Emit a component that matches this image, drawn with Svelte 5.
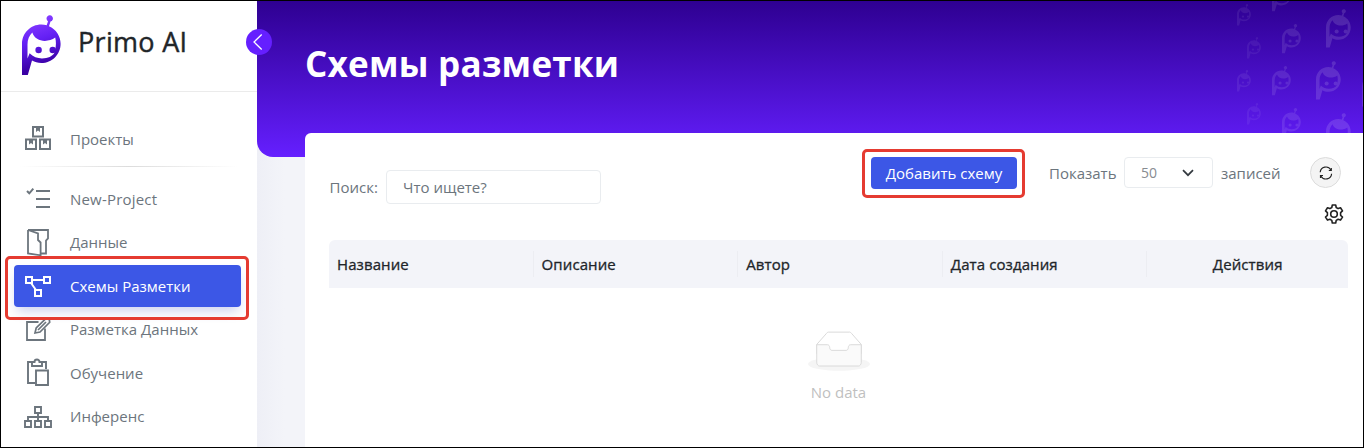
<script>
  const menu = [
    { label: 'Проекты', icon: 'projects' },
    { label: 'New-Project', icon: 'tasks' },
    { label: 'Данные', icon: 'data' },
    { label: 'Схемы Разметки', icon: 'schema', active: true },
    { label: 'Разметка Данных', icon: 'edit' },
    { label: 'Обучение', icon: 'clipboard' },
    { label: 'Инференс', icon: 'tree' }
  ];
  const columns = ['Название', 'Описание', 'Автор', 'Дата создания', 'Действия'];
  const pattern = [
    [1237, 4, 14, 0.07], [1247, 37, 14, 0.06], [1237, 70, 14, 0.07], [1247, 103, 14, 0.06],
    [1272, -18, 19, 0.1], [1282, 24, 19, 0.1], [1272, 66, 19, 0.1], [1282, 108, 19, 0.1],
    [1326, 9, 25, 0.13], [1316, 61, 25, 0.13], [1326, 113, 25, 0.13], [1362, 68, 25, 0.13]
  ];
</script>

{#snippet mascot(fill)}
  <path {fill} fill-rule="evenodd" d="M0 60V28.700C0 18 8.600 9.400 19.300 9.400c2 0 3.700.3 5.400.8L26 6.200A3.200 3.200 0 1 1 28.500 6.600L27 11.200C34 14.300 38.600 21 38.600 28.700 38.600 39.500 30 48 19.300 48c-3.600 0-6.600-.9-9.300-2.500L5.800 60ZM10.300 17.600C7.200 20.500 5.500 25 5.500 29.500V43.500L7.600 38.300C11 42 15.500 43.400 20 43.400 26 43.400 30.500 41.600 32.600 37.600L33 35C34.200 31 34.200 26.500 33.200 22.600 26.500 27.600 13.500 27.600 10.300 17.600Z" />
  <circle {fill} cx="16.600" cy="35" r="3.200" />
  <circle {fill} cx="30.700" cy="35" r="3.200" />
{/snippet}

<div class="frame">
  <aside>
    <div class="brand">
      <svg class="logo" width="39" height="61" viewBox="0 0 39 61">
        <defs>
          <linearGradient id="lg" gradientUnits="userSpaceOnUse" x1="10" y1="8" x2="24" y2="50">
            <stop offset="0" stop-color="#8138ff" /><stop offset="0.400" stop-color="#6420f4" /><stop offset="1" stop-color="#3a00a4" />
          </linearGradient>
        </defs>
        {@render mascot('url(#lg)')}
      </svg>
      <span>Primo AI</span>
    </div>
    <nav>
      {#each menu as m, i}
        <div class="item" class:active={m.active}>
          <svg width="30" height="30" viewBox="0 0 30 30" fill="none" stroke="currentColor" stroke-width="2">
            {#if m.icon === 'projects'}
              <path d="M10 3h10v9.500h-10zM3 15.500h10V25H3zM17 15.500h10V25H17z" />
              <path stroke="none" fill="currentColor" d="M13 3v5l2-1.500 2 1.500V3zM6 15.500v5l2-1.500 2 1.500v-5zM20 15.500v5l2-1.500 2 1.500v-5z" />
            {:else if m.icon === 'tasks'}
              <path d="M13 7h14M13 15h14M13 23h14M4 7l2.300 2.300L10.300 4.700" />
            {:else if m.icon === 'data'}
              <path stroke-width="1.800" d="M5 2h20v8.500l-2 2V25.500h-5M5 2v23.500l12.600 1.800V14.500L15 12V5.500L5 2" />
            {:else if m.icon === 'schema'}
              <path d="M3 6h6v6H3zM21 6h6v6h-6zM12 19h6v6h-6zM9 9h12M8 12l5 7" />
            {:else if m.icon === 'edit'}
              <path stroke-width="1.800" d="M15.500 7H4v18h18V13.500" />
              <path stroke-width="1.700" d="M12 18l1.200-5L22.500 3.800l3.700.3.500 3.200L17 17zM15 15l8-8" />
            {:else if m.icon === 'clipboard'}
              <path stroke-width="1.900" d="M9.500 4H5v21h7M19.500 4H23v7M9 4v4h10V4h-2.500a2.500 2.500 0 0 0-5 0zM13 12.500h12V27H13z" />
            {:else}
              <path stroke-width="1.900" d="M12 5h6v6h-6zM2 19h6v6H2zM12 19h6v6h-6zM22 19h6v6h-6zM15 11v8M5 19v-4h20v4" />
            {/if}
          </svg>
          <span>{m.label}</span>
        </div>
        {#if i === 0}<div class="divider"></div>{/if}
      {/each}
    </nav>
    <button class="collapse" aria-label="Свернуть">
      <svg width="26" height="26" viewBox="0 0 26 26" fill="none" stroke="#fff" stroke-width="1.300"><path d="M15.700 5.500 8 13l7.700 7.500" /></svg>
    </button>
    <div class="mark mark-nav"></div>
  </aside>
  <main>
    <header>
      <svg class="pattern" width="130" height="132" viewBox="1233 1 130 132">
        {#each pattern as [x, y, w, o]}
          <g transform="translate({x} {y}) scale({w / 39})" opacity={o}>{@render mascot('#fff')}</g>
        {/each}
      </svg>
      <h1>Схемы разметки</h1>
    </header>
    <section>
      <div class="toolbar">
        <div class="search"><span class="caption">Поиск:</span><div class="field">Что ищете?</div></div>
        <div class="add"><button>Добавить схему</button><div class="mark mark-add"></div></div>
        <span class="show">Показать</span>
        <div class="select"><span>50</span>
          <svg width="12" height="8" viewBox="0 0 12 8" fill="none" stroke="#343a40" stroke-width="1.700"><path d="M1 1.200l5 5 5-5" /></svg>
        </div>
        <span class="records">записей</span>
        <div class="refresh">
          <svg width="14" height="14" viewBox="0 0 14 14" fill="none" stroke="#222" stroke-width="1.150"><path d="M1.200 6.300A5.700 5.700 0 0 1 11.900 4M12.600 7.700A5.700 5.700 0 0 1 1.900 10M12.300 1.900v2.600H9.800M1.500 12.100V9.500H4" /></svg>
        </div>
      </div>
      <div class="settings">
        <svg width="20" height="20" viewBox="0 0 20 20" fill="none" stroke="#222" stroke-width="1.600" stroke-linejoin="round"><path d="M8.300 1h3.400l.5 2.500 1.900 1.100 2.400-.8 2 3.100-1.900 1.700v2.700l1.900 1.700-2 3.100-2.400-.8-1.900 1.100-.5 2.600H8.300l-.5-2.600-1.900-1.100-2.400.8-2-3.100 1.900-1.700V8.600L1.500 6.900l2-3.100 2.400.8 1.900-1.100z" /><circle cx="10" cy="10" r="3.300" /></svg>
      </div>
      <div class="thead">
        {#each columns as c}<div class="th">{c}</div>{/each}
      </div>
      <div class="empty">
        <svg width="62" height="40" viewBox="0 0 64 41">
          <g transform="translate(0 1)" fill="none">
            <ellipse fill="#f5f5f5" cx="32" cy="33" rx="32" ry="7" />
            <g stroke="#d9d9d9"><path d="M55 12.760 44.854 1.258C44.367.474 43.656 0 42.907 0H21.093c-.749 0-1.460.474-1.947 1.257L9 12.761V22h46v-9.240z" />
            <path fill="#fafafa" d="M41.613 15.931c0-1.605.994-2.930 2.227-2.931H55v18.137C55 33.260 53.680 35 52.050 35h-40.100C10.320 35 9 33.259 9 31.137V13h11.160c1.233 0 2.227 1.323 2.227 2.928v.022c0 1.605 1.005 2.901 2.237 2.901h14.752c1.232 0 2.237-1.308 2.237-2.913v-.007z" /></g>
          </g>
        </svg>
        <p>No data</p>
      </div>
    </section>
  </main>
</div>

<style>
  :global(body) { margin: 0; }
  * { box-sizing: border-box; }
  .frame { width: 1364px; height: 448px; border: 1px solid #000; display: flex; overflow: hidden; background: #f3f4f9; font: 15px/20px "Open Sans", "Noto Sans", sans-serif; color: #6c757d; }
  aside { position: relative; width: 256px; flex: none; background: #fff; z-index: 2; }
  .brand { height: 91px; border-bottom: 1px solid #ebebeb; display: flex; padding: 13px 0 0 21px; gap: 17px; color: #212529; font-size: 27px; letter-spacing: 0.3px; -webkit-text-stroke: 0.4px #212529; line-height: 56px; }
  .logo { flex: none; margin-top: 0.5px; }
  nav { padding: 26px 16px 0 13px; }
  .item { height: 42px; margin-bottom: 1.600px; border-radius: 4px; display: flex; align-items: center; padding-left: 9px; gap: 17px; }
  .item svg { flex: none; }
  .item span { white-space: nowrap; padding-bottom: 1px; }
  .item:nth-child(3) span { letter-spacing: 0.2px; }
  .active { background: #3c57e6; color: #fff; box-shadow: 0 7px 12px -3px rgba(50, 70, 190, 0.25); }
  .divider { height: 1px; margin: 6px 3px 11px 6px; background: linear-gradient(90deg, transparent, #dcdcdc 50%, transparent); }
  .collapse { position: absolute; left: 245px; top: 28px; width: 26px; height: 26px; border: 0; padding: 0; border-radius: 50%; background: #651fff; }
  .collapse svg, .item svg, .empty svg { display: block; }
  .mark { position: absolute; border: 3px solid #e53b31; border-radius: 5px; pointer-events: none; }
  .mark-nav { left: 4px; top: 255px; width: 244px; height: 64px; }
  main { flex: 1; min-width: 0; background: linear-gradient(90deg, #eeeff6, #f3f4f9 28px); }
  header { position: relative; height: 156px; background: linear-gradient(#2e0091, #651fff); border-bottom-left-radius: 16px; padding: 38px 0 0 48px; }
  .pattern { position: absolute; right: 0; top: 0; }
  h1 { margin: 0; color: #fff; font-size: 35px; letter-spacing: 0.25px; line-height: 50px; font-weight: 700; white-space: nowrap; }
  section { position: relative; margin: -24px 0 0 48px; height: 314px; background: #fff; border-top-left-radius: 6px; padding: 23px 15px 0 24px; }
  .toolbar { display: flex; height: 34px; }
  .search { display: flex; align-items: center; height: 34px; margin-top: 14px; width: 542px; }
  .caption { width: 57px; padding-left: 0.5px; }
  .field { width: 215px; height: 34px; border: 1px solid #e9ecef; border-radius: 4px; padding: 6px 16px; }
  .add { position: relative; margin-top: 1px; }
  .add button { width: 146px; height: 32px; padding: 0; border: 0; border-radius: 4px; background: #3c57e6; color: #fff; font: inherit; white-space: nowrap; }
  .mark-add { left: -9px; top: -8px; width: 163px; height: 49px; }
  .show { margin: 7px 0 0 32px; width: 75px; }
  .select { width: 89px; height: 31px; margin-top: 1px; border: 1px solid #e9ecef; border-radius: 4px; display: flex; align-items: center; justify-content: space-between; padding: 0 18px 0 16px; color: #888c91; font-size: 14px; }
  .records { margin: 7px 0 0 8px; width: 89px; }
  .refresh { width: 31px; height: 31px; margin-top: 1px; border: 1px solid #dcdcdc; border-radius: 50%; background: #f4f4f4; display: flex; align-items: center; justify-content: center; flex: none; }
  .settings { height: 20px; margin: 14px 4px 0 0; display: flex; justify-content: flex-end; }
  .thead { margin-top: 16px; height: 48px; background: #f3f4f9; border-radius: 6px 6px 0 0; display: grid; grid-template-columns: 204.600px 204.600px 204.600px 204.600px 1fr; align-items: center; color: #212529; font-size: 15px; letter-spacing: 0.1px; -webkit-text-stroke: 0.3px #212529; }
  .th { padding-left: 8px; height: 26px; line-height: 27px; border-right: 1px solid #ecedf2; white-space: nowrap; }
  .th:last-child { border: 0; text-align: center; padding: 0; }
  .empty { display: flex; flex-direction: column; align-items: center; padding-top: 43px; color: #bfbfbf; }
  .empty p { margin: 11px 0 0; }
</style>
